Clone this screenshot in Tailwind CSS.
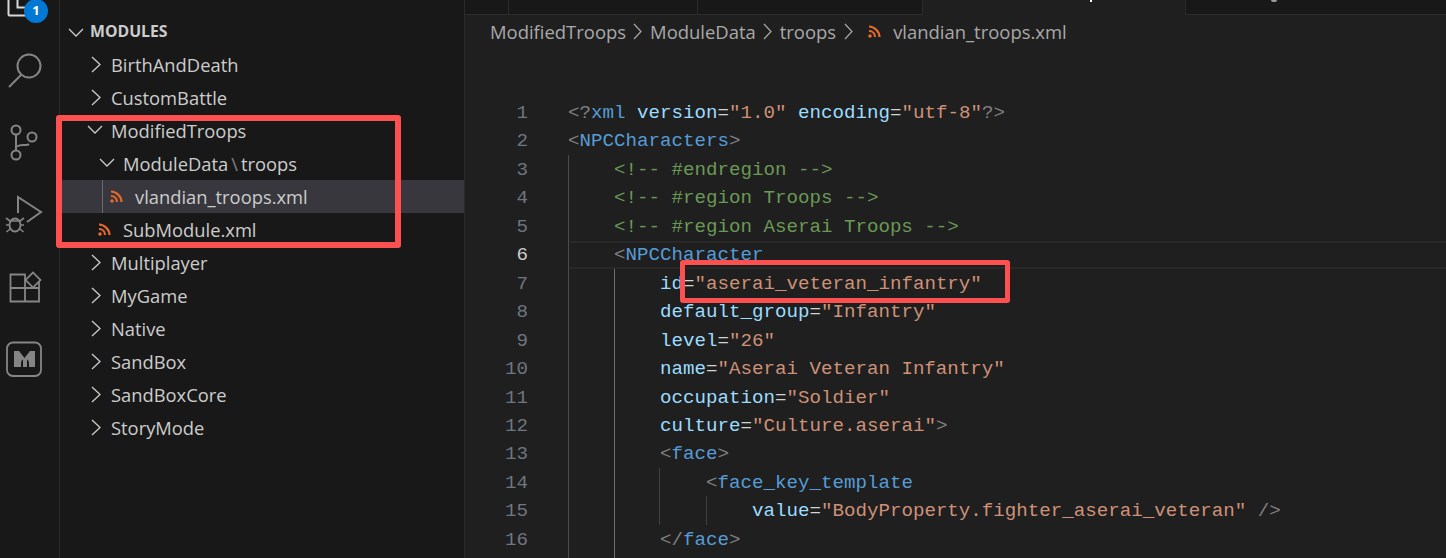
<!DOCTYPE html>
<html lang="en">
<head>
  <meta charset="UTF-8" />
  <title>vlandian_troops.xml - Modules</title>
  <script src="https://cdn.jsdelivr.net/npm/@tailwindcss/browser@4"></script>
</head>
<body class="w-[1446px] h-[558px] overflow-hidden bg-[#181818] relative flex">
  <!-- activity bar -->
  <aside class="w-[60px] h-full shrink-0 border-r border-[#2b2b2b] relative text-[#858585]">
    <svg class="absolute left-0 top-0" width="60" height="240" viewBox="0 0 60 240" fill="none" stroke="#858585" stroke-width="2">
      <path d="M8.500 -4V14a1.600 1.600 0 0 0 1.600 1.600H26" stroke="#d7d7d7"/>
      <path d="M17.500 -2V7.500H26" stroke="#d7d7d7"/>
      <circle cx="29" cy="66" r="11.500"/><path d="M21 75 9 87"/>
      <circle cx="16" cy="130" r="4.500"/><circle cx="16" cy="155" r="4.500"/><circle cx="32" cy="137" r="4.500"/>
      <path d="M16 134.500V150.500M17 146.500c2-1.500 4-1.500 6-1.500h3c2 0 3-1 3-1"/>
    </svg>
    <span class="absolute left-[24px] top-[-1px] w-6 h-6 rounded-full bg-[#0078d4] text-white text-[13px] font-bold flex items-center justify-center font-['Open_Sans',sans-serif]">1</span>
    <svg class="absolute left-0 top-[190px]" width="60" height="190" viewBox="0 0 60 190" fill="none" stroke="#858585" stroke-width="2">
      <path d="M18 23V7L41 22 27 32"/>
      <ellipse cx="15" cy="35" rx="5.500" ry="6.500" stroke-width="1.800"/>
      <path d="M6 28l4 3M24 28l-4 3M6 35h3.500M24 35h-3.500M6.500 42l3.500-3M23.500 42l-3.500-3M10 31h10" stroke-width="1.600"/>
      <path d="M10.500 84.500h14.500v27h-14.500zM10.500 98h28.500v13.500h-14M25 98V98M39 98v-8" stroke-width="1.800"/>
      <rect x="27.700" y="84.700" width="10.600" height="10.600" transform="rotate(45 33 90)" fill="#181818" stroke-width="1.800"/>
      <rect x="7" y="152.500" width="34" height="33.500" rx="6" stroke-width="1.800"/>
      <path d="M14 161h5l5.500 7 5.500-7h5v16h-6v-4c0-2-1-3-2-3.500v7.500h-4v-7.500c-1 .5-2 1.500-2 3.500v4h-7z" fill="#858585" stroke="none"/>
    </svg>
  </aside>

  <!-- explorer -->
  <section class="w-[405px] h-full shrink-0 border-r border-[#2b2b2b] text-[#cccccc] font-['Open_Sans',sans-serif] text-[18.350px]">
    <div class="h-[48px] flex items-center pl-[8px] pt-[16px] text-[15.800px] font-bold">
      <svg width="16" height="16" viewBox="0 0 16 16" fill="none" stroke="#cccccc" stroke-width="1.300"><path d="M1 5l7 7 7-7"/></svg>
      <span class="ml-[6px]">MODULES</span>
    </div>
    <div class="flex flex-col">
      <div class="h-[33px] flex items-center pl-[31px] gap-[9px]"><svg width="11" height="17" viewBox="0 0 11 17" fill="none" stroke="#cccccc" stroke-width="1.300"><path d="M1 1l8 7.500-8 7.500"/></svg>BirthAndDeath</div>
      <div class="h-[33px] flex items-center pl-[31px] gap-[9px]"><svg width="11" height="17" viewBox="0 0 11 17" fill="none" stroke="#cccccc" stroke-width="1.300"><path d="M1 1l8 7.500-8 7.500"/></svg>CustomBattle</div>
      <div class="h-[33px] flex items-center pl-[27px] gap-[8px]"><svg width="16" height="11" viewBox="0 0 16 11" fill="none" stroke="#cccccc" stroke-width="1.300"><path d="M1 1l7 7 7-7"/></svg>ModifiedTroops</div>
      <div class="h-[33px] flex items-center pl-[39px] gap-[8px]"><svg width="16" height="11" viewBox="0 0 16 11" fill="none" stroke="#cccccc" stroke-width="1.300"><path d="M1 1l7 7 7-7"/></svg>ModuleData<span class="-mx-[5px] text-[#808080]">\</span>troops</div>
      <div class="h-[33px] flex items-center pl-[50px] bg-[#37373d] text-[#cccccc] relative">
        <span class="absolute left-[42px] top-0 h-full w-px bg-[#6a6a6a]"></span>
        <svg width="13" height="13" viewBox="0 0 13 13" fill="none" stroke="#e8692c" stroke-width="2.200"><path d="M1 1.500c5.500 0 10.500 5 10.500 10.500M1 6c3.500 0 6 2.500 6 6"/><circle cx="2" cy="11" r="1.800" fill="#e8692c" stroke="none"/></svg>
        <span class="ml-[12px]">vlandian_troops.xml</span>
      </div>
      <div class="h-[33px] flex items-center pl-[38px]">
        <svg width="13" height="13" viewBox="0 0 13 13" fill="none" stroke="#e8692c" stroke-width="2.200"><path d="M1 1.500c5.500 0 10.500 5 10.500 10.500M1 6c3.500 0 6 2.500 6 6"/><circle cx="2" cy="11" r="1.800" fill="#e8692c" stroke="none"/></svg>
        <span class="ml-[12px]">SubModule.xml</span>
      </div>
      <div class="h-[33px] flex items-center pl-[31px] gap-[9px]"><svg width="11" height="17" viewBox="0 0 11 17" fill="none" stroke="#cccccc" stroke-width="1.300"><path d="M1 1l8 7.500-8 7.500"/></svg>Multiplayer</div>
      <div class="h-[33px] flex items-center pl-[31px] gap-[9px]"><svg width="11" height="17" viewBox="0 0 11 17" fill="none" stroke="#cccccc" stroke-width="1.300"><path d="M1 1l8 7.500-8 7.500"/></svg>MyGame</div>
      <div class="h-[33px] flex items-center pl-[31px] gap-[9px]"><svg width="11" height="17" viewBox="0 0 11 17" fill="none" stroke="#cccccc" stroke-width="1.300"><path d="M1 1l8 7.500-8 7.500"/></svg>Native</div>
      <div class="h-[33px] flex items-center pl-[31px] gap-[9px]"><svg width="11" height="17" viewBox="0 0 11 17" fill="none" stroke="#cccccc" stroke-width="1.300"><path d="M1 1l8 7.500-8 7.500"/></svg>SandBox</div>
      <div class="h-[33px] flex items-center pl-[31px] gap-[9px]"><svg width="11" height="17" viewBox="0 0 11 17" fill="none" stroke="#cccccc" stroke-width="1.300"><path d="M1 1l8 7.500-8 7.500"/></svg>SandBoxCore</div>
      <div class="h-[33px] flex items-center pl-[31px] gap-[9px]"><svg width="11" height="17" viewBox="0 0 11 17" fill="none" stroke="#cccccc" stroke-width="1.300"><path d="M1 1l8 7.500-8 7.500"/></svg>StoryMode</div>
    </div>
  </section>

  <!-- editor -->
  <main class="flex-1 h-full flex flex-col bg-[#1f1f1f] min-w-0 overflow-hidden">
    <div class="h-[15px] shrink-0 flex bg-[#181818] border-b border-[#2b2b2b]">
      <div class="w-[44px] border-r border-[#2b2b2b]"></div>
      <div class="w-[189px] border-r border-[#2b2b2b]"></div>
      <div class="w-[225px] border-r border-[#2b2b2b]"></div>
      <div class="w-[263px] h-[15px] bg-[#1f1f1f] border-r border-[#2b2b2b] pl-[167px]"><span class="block w-[2px] h-[2px] bg-white"></span></div>
      <div class="pl-[85px]"><span class="block w-[6px] h-[2px] rounded-b-full bg-[#9a9a9a]"></span></div>
    </div>
    <nav class="h-[33px] shrink-0 flex items-center pl-[25px] text-[18.450px] text-[#a9a9a9] font-['Open_Sans',sans-serif]">
      <span>ModifiedTroops</span>
      <svg class="mx-[7px]" width="10" height="17" viewBox="0 0 10 17" fill="none" stroke="#a9a9a9" stroke-width="1.200"><path d="M1 1l7 7.500-7 7.500"/></svg>
      <span>ModuleData</span>
      <svg class="mx-[7px]" width="10" height="17" viewBox="0 0 10 17" fill="none" stroke="#a9a9a9" stroke-width="1.200"><path d="M1 1l7 7.500-7 7.500"/></svg>
      <span>troops</span>
      <svg class="mx-[8px]" width="10" height="17" viewBox="0 0 10 17" fill="none" stroke="#a9a9a9" stroke-width="1.200"><path d="M1 1l7 7.500-7 7.500"/></svg>
      <svg class="ml-[6px] mr-[12px]" width="13" height="13" viewBox="0 0 13 13" fill="none" stroke="#e8692c" stroke-width="2.200"><path d="M1 1.500c5.500 0 10.500 5 10.500 10.500M1 6c3.500 0 6 2.500 6 6"/><circle cx="2" cy="11" r="1.800" fill="#e8692c" stroke="none"/></svg>
      <span>vlandian_troops.xml</span>
    </nav>
    <div class="flex pt-[51px] font-['Liberation_Mono',monospace] text-[19.170px] leading-[28.450px]">
      <div class="w-[63px] shrink-0 text-right text-[#6e7681]">
        <div>1</div><div>2</div><div>3</div><div>4</div><div>5</div><div class="text-[#cccccc]">6</div><div>7</div><div>8</div><div>9</div><div>10</div><div>11</div><div>12</div><div>13</div><div>14</div><div>15</div><div>16</div>
      </div>
      <div class="ml-[40px] flex-1 relative flex flex-col whitespace-pre text-[#d4d4d4]">
        <span class="absolute left-0 right-0 top-[142px] h-[28px] border-y-2 border-[#282828]"></span>
        <span class="absolute left-0 top-[56px] w-px h-[403px] bg-[#4a4a4a]"></span>
        <span class="absolute left-[46px] top-[170px] w-px h-[289px] bg-[#707070]"></span>
        <span class="absolute left-[91px] top-[369px] w-px h-[57px] bg-[#404040]"></span>
        <span class="absolute left-[138px] top-[397px] w-px h-[29px] bg-[#404040]"></span>
        <div class="relative"><span class="text-[#808080]">&lt;?</span><span class="text-[#569cd6]">xml</span> <span class="text-[#9cdcfe]">version</span>=<span class="text-[#ce9178]">"1.0"</span> <span class="text-[#9cdcfe]">encoding</span>=<span class="text-[#ce9178]">"utf-8"</span><span class="text-[#808080]">?&gt;</span></div>
        <div class="relative"><span class="text-[#808080]">&lt;</span><span class="text-[#569cd6]">NPCCharacters</span><span class="text-[#808080]">&gt;</span></div>
        <div class="relative text-[#6a9955]">    &lt;!-- #endregion --&gt;</div>
        <div class="relative text-[#6a9955]">    &lt;!-- #region Troops --&gt;</div>
        <div class="relative text-[#6a9955]">    &lt;!-- #region Aserai Troops --&gt;</div>
        <div class="relative">    <span class="text-[#808080]">&lt;</span><span class="text-[#569cd6]">NPCCharacter</span></div>
        <div class="relative">        <span class="text-[#9cdcfe]">id</span>=<span class="text-[#ce9178]">"aserai_veteran_infantry"</span></div>
        <div class="relative">        <span class="text-[#9cdcfe]">default_group</span>=<span class="text-[#ce9178]">"Infantry"</span></div>
        <div class="relative">        <span class="text-[#9cdcfe]">level</span>=<span class="text-[#ce9178]">"26"</span></div>
        <div class="relative">        <span class="text-[#9cdcfe]">name</span>=<span class="text-[#ce9178]">"Aserai Veteran Infantry"</span></div>
        <div class="relative">        <span class="text-[#9cdcfe]">occupation</span>=<span class="text-[#ce9178]">"Soldier"</span></div>
        <div class="relative">        <span class="text-[#9cdcfe]">culture</span>=<span class="text-[#ce9178]">"Culture.aserai"</span><span class="text-[#808080]">&gt;</span></div>
        <div class="relative">        <span class="text-[#808080]">&lt;</span><span class="text-[#569cd6]">face</span><span class="text-[#808080]">&gt;</span></div>
        <div class="relative">            <span class="text-[#808080]">&lt;</span><span class="text-[#569cd6]">face_key_template</span></div>
        <div class="relative">                <span class="text-[#9cdcfe]">value</span>=<span class="text-[#ce9178]">"BodyProperty.fighter_aserai_veteran"</span> <span class="text-[#808080]">/&gt;</span></div>
        <div class="relative">        <span class="text-[#808080]">&lt;/</span><span class="text-[#569cd6]">face</span><span class="text-[#808080]">&gt;</span></div>
      </div>
    </div>
  </main>

  <!-- red annotation boxes drawn over the screenshot -->
  <div class="absolute left-[56px] top-[115px] w-[345px] h-[133px] border-[6px] border-[#fd5050] rounded-[3px]"></div>
  <div class="absolute left-[680px] top-[260px] w-[330px] h-[43px] border-[5px] border-[#fd5050] rounded-[3px]"></div>
</body>
</html>
